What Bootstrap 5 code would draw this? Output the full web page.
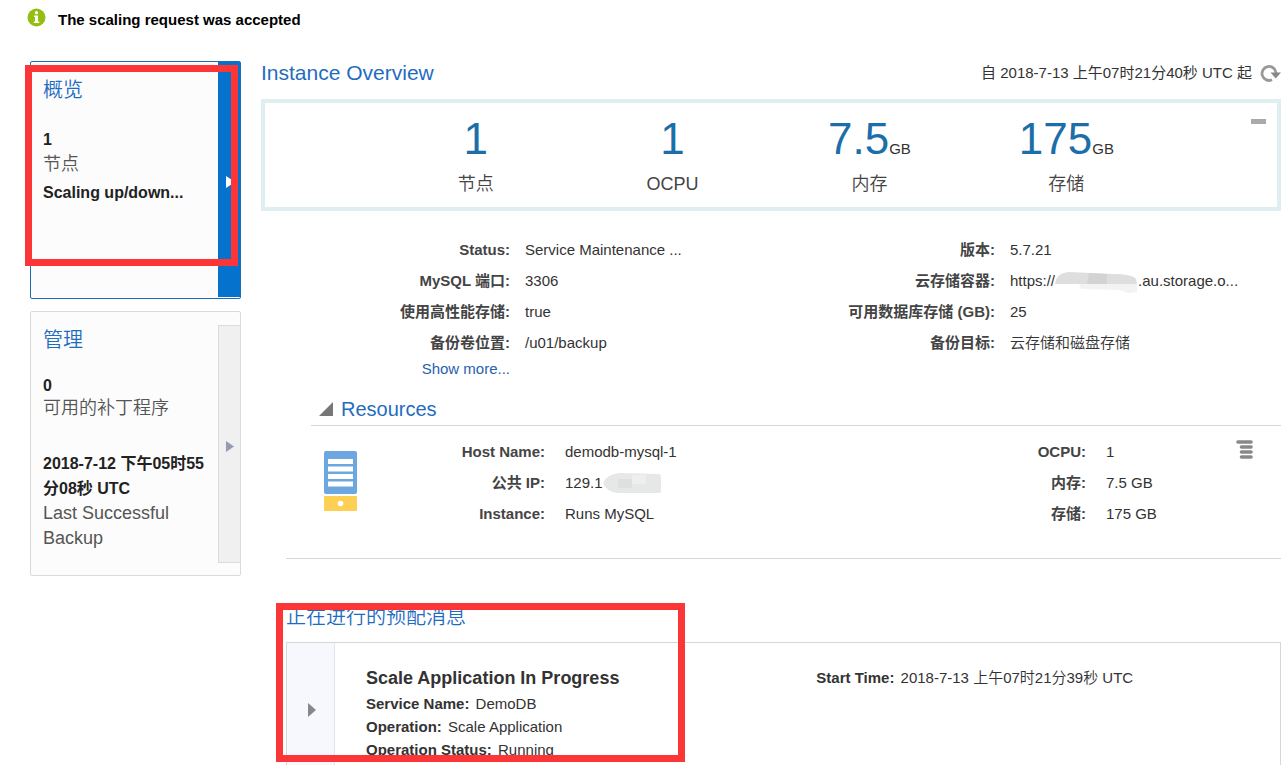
<!DOCTYPE html>
<html lang="zh-CN">
<head>
<meta charset="utf-8">
<meta name="viewport" content="width=device-width, initial-scale=1">
<title>Instance Overview</title>
<link href="https://cdn.jsdelivr.net/npm/bootstrap@5.3.0/dist/css/bootstrap.min.css" rel="stylesheet">
<style>
  body { font-family: "Liberation Sans", "Noto Sans CJK SC", sans-serif; font-size: 15px; line-height: 24px; color: #333; background: #fff; }
  h1, h2, h3, p, dl, dt, dd { margin: 0; }
  h1, h2 { font-size: 20px; line-height: 24px; font-weight: 350; color: #1f6cbf; }
  h1 { font-size: 21px; }
  svg { display: block; flex: none; }
  .notice { padding: 8px 27px 29px; gap: 12px; color: #000; }
  .shell { padding: 0 6px 0 30px; gap: 20px; }
  .side { flex: 0 0 211px; gap: 12px; }
  .tile { border: 1px solid #d9dadb; border-radius: 2px; background: #fcfcfc; min-height: 238px; }
  .tile.current { border-color: #1a6cb4; }
  .tile-text { padding: 16px 4px 24px 12px; }
  .tile-text h2 { margin-bottom: 26px; }
  .tile-strip { flex: 0 0 22px; border: 1px solid #dcdcdc; border-right: 0; background: #f0f0f0; margin: 13px 0 12px; padding: 5px 0 0 7px; }
  .current .tile-strip { margin: 0 0 1px; border: 0; background: #0572ce; padding-left: 8px; }
  .figure-text { font-size: 16px; font-weight: 700; color: #222; }
  .caption-text { font-size: 18px; line-height: 25px; font-weight: 350; color: #555; }
  .manage h2 { margin-bottom: 23px; }
  .manage .figure-text, .manage .patch { line-height: 22px; }
  .manage .backup { line-height: 25px; margin-top: 32px; }
  .outline { position: absolute; border: 7px solid #fc3636; pointer-events: none; z-index: 2; }
  .outline-tile { left: -6px; top: 3px; width: 213px; height: 201px; }
  .outline-message { left: -10px; top: -2px; width: 409px; height: 159px; }
  .stats { border: 4px solid #dfeef0; padding: 11px 11%; margin-top: 14px; }
  .stat-value { font-size: 44px; line-height: 50px; color: #1c6ea8; }
  .stat-value small { font-size: 15px; line-height: 15px; color: #333; }
  .stat-label { font-size: 18px; margin-top: 8px; font-weight: 350; color: #444; }
  .collapse-btn { right: 11px; top: 16px; width: 15px; height: 5px; background: #aaa; }
  .facts { display: grid; line-height: 31px; }
  .facts dt { text-align: right; color: #444; white-space: nowrap; }
  .facts dd { padding-left: 15px; white-space: nowrap; font-weight: 350; }
  .facts-main { grid-template-columns: 249fr 250fr 235fr 286fr; margin-top: 23px; }
  .facts-main a { text-align: right; line-height: 22px; color: #1f62ae; text-decoration: none; }
  .facts-host { grid-template-columns: 174fr 390fr 151fr 143fr; }
  .facts-host dd { padding-left: 20px; }
  .lower { padding-left: 25px; }
  .resources { margin-top: 17px; padding-bottom: 29px; border-bottom: 1px solid #d6d7d8; }
  .resources-head { margin-left: 25px; padding: 0 8px 4px; gap: 8px; border-bottom: 1px solid #d6d7d8; }
  .host { margin-left: 25px; padding-top: 10px; }
  .host-icon { flex: 0 0 60px; padding: 15px 0 0 13px; }
  .host-menu { flex: 0 0 52px; padding-left: 7px; padding-top: 4px; line-height: 19px; }
  .host-menu .btn { line-height: 19px; }
  .messages { margin-top: 46px; }
  .message { border: 1px solid #d6d7d8; margin-top: 13px; }
  .message-strip { flex: 0 0 48px; border: 0; border-right: 1px solid #e4e5ea; background: #f7f8fd; padding-left: 21px; }
  .message-body { padding: 23px 31px 16px; line-height: 23px; }
  .message-body h3 { font-size: 18px; line-height: 24px; font-weight: 700; margin-bottom: 2px; }
  .message-main { flex: 0 0 51%; }
  .message-body dt, .message-body dd { display: inline; }
  .message-body dd { margin-left: 2px; font-weight: 350; }
</style>
</head>
<body class="vh-100 overflow-hidden">
<div class="notice d-flex align-items-start fw-bold" role="status">
  <svg width="19" height="19" viewBox="0 0 19 19" aria-hidden="true"><circle cx="9.500" cy="9.500" r="9" fill="#95bd12"/><circle cx="9.500" cy="4.700" r="1.600" fill="#fff"/><path d="M7 7.500h4v6h1.200V15H6.800v-1.500H8V9H7z" fill="#fff"/></svg>
  <span>The scaling request was accepted</span>
</div>

<div class="shell d-flex align-items-start">
  <aside class="side d-flex flex-column">
    <section class="tile current position-relative d-flex">
      <div class="tile-text flex-grow-1">
        <h2>概览</h2>
        <p class="figure-text">1</p>
        <p class="caption-text">节点</p>
        <p class="figure-text mt-1">Scaling up/down...</p>
      </div>
      <button type="button" class="tile-strip" aria-label="概览"><svg width="9" height="12" viewBox="0 0 9 12"><path d="M0 0l9 6-9 6z" fill="#fff"/></svg></button>
      <div class="outline outline-tile"></div>
    </section>
    <section class="tile manage d-flex">
      <div class="tile-text flex-grow-1">
        <h2>管理</h2>
        <p class="figure-text">0</p>
        <p class="caption-text patch">可用的补丁程序</p>
        <p class="figure-text backup">2018-7-12 下午05时55分08秒 UTC</p>
        <p class="caption-text">Last Successful Backup</p>
      </div>
      <button type="button" class="tile-strip" aria-label="管理"><svg width="8" height="11" viewBox="0 0 8 11"><path d="M0 0l8 5.500-8 5.500z" fill="#969ab2"/></svg></button>
    </section>
  </aside>

  <main class="flex-grow-1">
    <div class="d-flex align-items-center justify-content-between">
      <h1>Instance Overview</h1>
      <div class="d-flex align-items-center gap-2">
        <span class="caption-date">自 2018-7-13 上午07时21分40秒 UTC 起</span>
        <button type="button" class="btn p-0 border-0" aria-label="刷新"><svg width="21" height="18" viewBox="0 0 21 18"><path d="M12 15.800A7 7 0 1 1 16 9" fill="none" stroke="#999" stroke-width="2.800"/><path d="M10.500 8.500H21l-5.300 6z" fill="#888"/></svg></button>
      </div>
    </div>

    <section class="stats position-relative">
      <div class="row g-0 text-center">
        <div class="col"><div class="stat-value">1</div><div class="stat-label">节点</div></div>
        <div class="col"><div class="stat-value">1</div><div class="stat-label">OCPU</div></div>
        <div class="col"><div class="stat-value">7.5<small>GB</small></div><div class="stat-label">内存</div></div>
        <div class="col"><div class="stat-value">175<small>GB</small></div><div class="stat-label">存储</div></div>
      </div>
      <button type="button" class="collapse-btn position-absolute border-0 p-0" aria-label="折叠"></button>
    </section>

    <dl class="facts facts-main">
      <dt>Status:</dt><dd>Service Maintenance ...</dd>
      <dt>版本:</dt><dd>5.7.21</dd>
      <dt>MySQL 端口:</dt><dd>3306</dd>
      <dt>云存储容器:</dt><dd class="d-flex align-items-center">https://<svg width="83" height="24" viewBox="0 0 83 24"><path d="M0 15Q1 4 14 3L58 5q19 0 23 5l1 5z" fill="#dedede"/><path d="M34 4l18 1v10H32z" fill="#d3d3d4"/><path d="M24 15h58v8l-8 1-10-3-38-1z" fill="#f3f3f3"/></svg>.au.storage.o...</dd>
      <dt>使用高性能存储:</dt><dd>true</dd>
      <dt>可用数据库存储 (GB):</dt><dd>25</dd>
      <dt>备份卷位置:</dt><dd>/u01/backup</dd>
      <dt>备份目标:</dt><dd>云存储和磁盘存储</dd>
      <dt class="fw-normal lh-1"><a href="#" class="d-block">Show more...</a></dt>
    </dl>

    <div class="lower">
      <section class="resources">
        <div class="resources-head d-flex align-items-center">
          <svg width="14" height="14" viewBox="0 0 14 14" aria-hidden="true"><path d="M14 0v14H0z" fill="#777"/></svg>
          <h2>Resources</h2>
        </div>
        <div class="host d-flex align-items-start">
          <div class="host-icon"><svg width="33" height="60" viewBox="0 0 33 60" aria-hidden="true"><rect width="33" height="43" rx="2" fill="#6da7e0"/><path d="M4 8h25v5H4zM4 15.500h25v5H4zM4 23h25v5H4zM4 30.500h25v5H4z" fill="#fff"/><rect y="45" width="33" height="15" rx="1" fill="#fdd054"/><circle cx="16.500" cy="52.500" r="2.800" fill="#fff"/></svg></div>
          <dl class="facts facts-host flex-grow-1">
            <dt>Host Name:</dt><dd>demodb-mysql-1</dd>
            <dt>OCPU:</dt><dd>1</dd>
            <dt>公共 IP:</dt><dd class="d-flex align-items-center">129.1<svg width="58" height="20" viewBox="0 0 58 20"><path d="M0 10Q4 1 17 0l38 1q3 0 3 3v14q0 2-3 2H14Q3 18 0 10z" fill="#e6e7e7"/><path d="M15 6h14v9H15z" fill="#dedfdf"/><path d="M29 2h14v9H29z" fill="#eeeeee"/></svg></dd>
            <dt>内存:</dt><dd>7.5 GB</dd>
            <dt>Instance:</dt><dd>Runs MySQL</dd>
            <dt>存储:</dt><dd>175 GB</dd>
          </dl>
          <div class="host-menu"><button type="button" class="btn p-0 border-0 d-block" aria-label="菜单"><svg width="17" height="19" viewBox="0 0 17 19"><path d="M2 2h13M5.500 7h9.500M5.500 12h9.500M5.500 17h9.500" stroke="#888" stroke-width="3.600" stroke-linecap="round"/></svg></button></div>
        </div>
      </section>

      <section class="messages position-relative">
        <h2>正在进行的预配消息</h2>
        <article class="message d-flex">
          <button type="button" class="message-strip" aria-label="展开"><svg width="8" height="14" viewBox="0 0 8 14"><path d="M0 0l8 7-8 7z" fill="#888"/></svg></button>
          <div class="message-body d-flex flex-grow-1">
            <div class="message-main">
              <h3>Scale Application In Progress</h3>
              <dl>
                <div><dt>Service Name:</dt> <dd>DemoDB</dd></div>
                <div><dt>Operation:</dt> <dd>Scale Application</dd></div>
                <div><dt>Operation Status:</dt> <dd>Running</dd></div>
              </dl>
            </div>
            <dl>
              <div><dt>Start Time:</dt> <dd>2018-7-13 上午07时21分39秒 UTC</dd></div>
            </dl>
          </div>
        </article>
        <div class="outline outline-message"></div>
      </section>
    </div>
  </main>
</div>
<script src="https://cdn.jsdelivr.net/npm/bootstrap@5.3.0/dist/js/bootstrap.bundle.min.js"></script>
</body>
</html>
